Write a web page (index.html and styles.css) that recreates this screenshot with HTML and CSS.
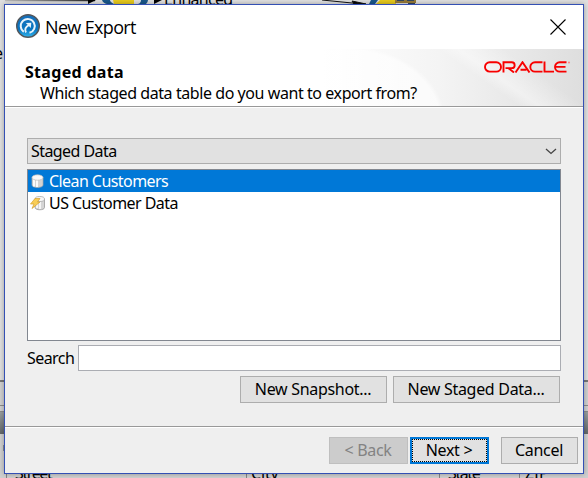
FILE: index.html
```html
<!DOCTYPE html>
<html lang="en">
<head>
<meta charset="utf-8">
<title>New Export</title>
<link rel="stylesheet" href="styles.css">
</head>
<body>
<svg class="backdrop" width="588" height="478" viewBox="0 0 588 478" aria-hidden="true">
  <defs>
    <linearGradient id="bar" x1="0" y1="0" x2="0" y2="1"><stop offset="0" stop-color="#999e9f"/><stop offset="1" stop-color="#626769"/></linearGradient>
    <linearGradient id="arrow" gradientUnits="userSpaceOnUse" x1="5" y1="0" x2="95" y2="0"><stop offset="0" stop-color="#bbb"/><stop offset="1" stop-color="#222"/></linearGradient>
  </defs>
  <rect width="588" height="380" fill="#dfdfdf"/>
  <rect y="380" width="588" height="98" fill="#cfcfcf"/>
  <path d="M5 .5H95" stroke="url(#arrow)" stroke-width="1.500"/>
  <path d="M88 0h8l-8 4zM154 0h8l-8 4z"/>
  <path d="M102 0q1 3 5 4h7q-4-2-4-4zM141 0q0 3-3 4h8q2-2 2-4z" fill="#19578a"/>
  <path d="M113 0h21v4h-20z" fill="#e6c91d"/>
  <path d="M322 0l40 4M352 1l14 3h-12z" stroke="#111" stroke-width="1"/>
  <path d="M371 0h7l-3 4h-6z" fill="#19578a"/>
  <path d="M380 0h16v4h-20z" fill="#e6c91d"/>
  <path d="M395 0h21v3h-21z" fill="#957a39"/>
  <path d="M397 0h7v1h-7zM407 0h7v1h-7zM408 3h7v1h-7z" fill="#34455c"/>
  <text x="164" y="5" class="behind">Enhanced</text>
  <text x="-6" y="59" class="behind">e</text>
  <path d="M0 381H588" stroke="#777" stroke-width="2"/>
  <path d="M0 405.500H588M0 411.500H588" stroke="#8b8b8b"/>
  <rect y="412" width="588" height="22" fill="url(#bar)"/>
  <path d="M4 445v6" stroke="#6d7480" stroke-width="1.500"/>
  <path d="M6.500 474v4M246.500 474v4M439.500 474v4M519.500 474v4" stroke="#858585"/>
  <text x="15" y="479" class="behind" textLength="37">Street</text>
  <text x="251" y="479" class="behind" textLength="27">City</text>
  <text x="448" y="479" class="behind" textLength="32">State</text>
  <text x="525" y="479" class="behind" textLength="23">ZIP</text>
</svg>
<main class="dialog">
  <header class="titlebar">
    <svg class="app-icon" width="26" height="26" viewBox="0 0 26 26">
      <defs><linearGradient id="blue" x1="0" y1="0" x2="0" y2="1"><stop offset="0" stop-color="#176fba"/><stop offset=".65" stop-color="#0875c1"/><stop offset="1" stop-color="#31b6ee"/></linearGradient></defs>
      <circle cx="13" cy="13" r="11.300" fill="url(#blue)" stroke="#53565a" stroke-width="1.400"/>
      <path d="M8.800 18.800A7 7 0 1 1 14.500 19.800" fill="none" stroke="#e8f3fb" stroke-width="2"/>
      <path d="M11 19.500q-2.500-4.500 3-7.500" fill="none" stroke="#e8f3fb" stroke-width="1.900"/>
      <path d="M10.800 10l5.500-.3-.5 5.300z" fill="#e8f3fb"/>
    </svg>
    <h1>New Export</h1>
    <svg class="close" width="16" height="16" viewBox="0 0 16 16"><path d="M.5.500l15 15M15.500.500l-15 15" stroke="#000" stroke-width="1.100"/></svg>
  </header>
  <section class="banner">
    <div class="banner-text">
      <h2>Staged data</h2>
      <p>Which staged data table do you want to export from?</p>
    </div>
    <svg class="oracle" width="87" height="12" viewBox="0 0 87 12" role="img" aria-label="Oracle">
      <g fill="none" stroke="#f80000" stroke-width="1.900">
        <path d="M5.700 1.200h6.600a4.700 4.700 0 0 1 0 9.400H5.700a4.700 4.700 0 0 1 0-9.400z"/>
        <path d="M19.500 11.500V1.200h8.200a2.900 2.900 0 0 1 0 5.900H21.500M24.500 7.200l5.500 4.300"/>
        <path d="M31.500 11.500l7-10.300 7 10.300M36.500 8.800h6"/>
        <path d="M58.500 1.200H51a4.700 4.700 0 0 0 0 9.400h7.500"/>
        <path d="M60.500 .5v10.100h9.500"/>
        <path d="M82.500 1.200h-6.800a4.700 4.700 0 0 0 0 9.400h6.800M71.500 5.900h10"/>
      </g>
      <circle cx="85" cy="1.500" r=".9" fill="#f77"/>
    </svg>
  </section>
  <section class="content">
    <div class="select"><span class="tight">Staged Data</span>
      <svg width="12" height="7" viewBox="0 0 12 7"><path d="M1 1l5 4.500L11 1" fill="none" stroke="#444" stroke-width="1.300"/></svg>
    </div>
    <ul class="list">
      <li class="selected">
        <svg width="18" height="16" viewBox="0 0 18 16"><path d="M3 4.500v7.500c0 3.300 11 3.300 11 0V4.500" fill="#d3d3d3" stroke="#aaa" stroke-width=".7"/><path d="M5 6v7.500M8 7v7" stroke="#fafafa" stroke-width="2"/><ellipse cx="8.500" cy="4.500" rx="5.500" ry="2.700" fill="#f8f8f8" stroke="#bbb" stroke-width=".7"/></svg>
        <span class="tight">Clean Customers</span>
      </li>
      <li>
        <svg width="18" height="16" viewBox="0 0 18 16"><path d="M6 4v8.500c0 3 9.500 3 9.500 0V4" fill="#d5d5d5" stroke="#999" stroke-width=".8"/><path d="M8 6v7M11 7v7" stroke="#fff" stroke-width="1.500"/><ellipse cx="10.750" cy="4" rx="4.750" ry="2.500" fill="#f8f8f8" stroke="#aaa" stroke-width=".8"/><path d="M6 3.500h5L8.500 7H11L3 13.500l2-4.500H1.500z" fill="#f8cd55" stroke="#d6a02c" stroke-width=".7"/></svg>
        <span class="tight">US Customer Data</span>
      </li>
    </ul>
    <label class="search"><span class="tight">Search</span><input type="text"></label>
    <div class="actions">
      <button class="snapshot">New Snapshot...</button>
      <button class="staged">New Staged Data...</button>
    </div>
  </section>
  <footer>
    <button class="back" disabled>&lt; Back</button>
    <button class="next">Next &gt;</button>
    <button class="cancel">Cancel</button>
  </footer>
</main>
</body>
</html>
```
FILE: styles.css
```css
* { box-sizing: border-box; }
body { margin: 0; width: 588px; height: 478px; overflow: hidden; padding: 4px; font: 16px "Noto Sans", sans-serif; color: #000; }
.backdrop { position: absolute; left: 0; top: 0; z-index: -1; }
.behind { font: 16px "Noto Sans", sans-serif; letter-spacing: -.7px; }
.dialog { width: 580px; height: 470px; border: 1px solid #3450b4; background: #efefef; display: flex; flex-direction: column; box-shadow: 0 0 5px rgba(0,0,0,.3); }
h1, h2, p, ul { margin: 0; padding: 0; font-weight: 400; }
h1, h2, p, span, button { white-space: nowrap; }
.titlebar { height: 44px; background: #fff; display: flex; align-items: center; padding: 0 17px 0 10px; }
.app-icon { margin-bottom: 2px; }
h1 { font: 18px "Open Sans", sans-serif; margin-left: 4px; letter-spacing: -.65px; }
.close { margin-left: auto; margin-bottom: 1px; }
.banner { height: 59px; border-bottom: 1px solid #fff; box-shadow: inset 0 -1px #999; display: flex; justify-content: space-between; background: radial-gradient(ellipse 100px 75px at 340px 72px, rgba(255,255,255,.6) 95%, rgba(255,255,255,0) 100%), linear-gradient(35deg, rgba(255,255,255,0) 78%, rgba(255,255,255,.4) 81%, rgba(255,255,255,0) 88%), linear-gradient(90deg, #fff 55%, #f4f4f4 75%, #dedede 100%); }
.banner-text { padding: 13px 0 0 20px; }
h2 { font: bold 16px/21px "Noto Sans", sans-serif; letter-spacing: .3px; }
p { line-height: 20px; padding-left: 15px; letter-spacing: -.43px; }
.oracle { margin: 12px 12px 0 0; }
.content { height: 319px; padding: 30px 22px 0; }
.select { height: 26px; width: 534px; background: #e1e1e1; border: 1px solid #adadad; display: flex; align-items: center; justify-content: space-between; padding: 0 3px; }
.tight { letter-spacing: -.57px; }
.list { list-style: none; margin-top: 5px; width: 534px; height: 172px; background: #fff; border: 1px solid #828790; }
.list li { height: 22px; display: flex; align-items: center; gap: 2px; padding-left: 1px; }
.list .selected { background: #0078d7; color: #fff; }
.search { display: flex; align-items: center; justify-content: space-between; width: 534px; height: 26px; margin-top: 4px; }
.search input { width: 483px; height: 26px; border: 1px solid #abadb3; background: #fff; padding: 0; }
.actions { display: flex; justify-content: flex-end; gap: 6px; width: 533px; margin-top: 5px; }
button { height: 27px; border: 1px solid #adadad; background: #e1e1e1; padding: 0 1px 2px 0; font: 16px "Noto Sans", sans-serif; color: #000; letter-spacing: -.3px; }
.snapshot { width: 147px; }
.staged { width: 167px; }
footer { flex: 1; display: flex; justify-content: flex-end; padding: 10px 5px 0; border-top: 1px solid #999; box-shadow: inset 0 1px #fff; margin-top: -1px; }
.back { width: 79px; background: #ccc; border-color: #bfbfbf; color: #838383; }
.next { width: 79px; margin: 0 12px 0 2px; border: 2px solid #0078d7; outline: 1px dotted #000; outline-offset: -3px; }
.cancel { width: 77px; }
```
